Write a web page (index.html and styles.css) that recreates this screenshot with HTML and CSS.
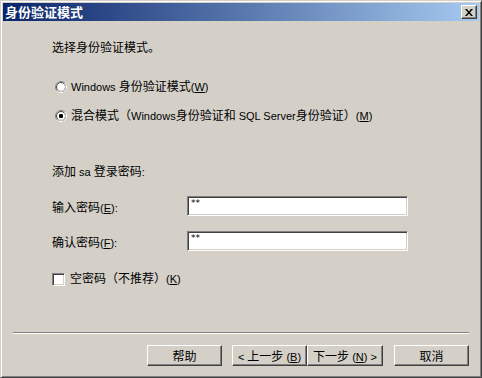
FILE: index.html
```html
<!DOCTYPE html>
<html>
<head>
<meta charset="utf-8">
<link rel="stylesheet" href="styles.css">
</head>
<body>
<div class="window">
  <div class="titlebar">
    <span class="title">身份验证模式</span>
    <span class="close"><svg width="8" height="7" viewBox="0 0 8 7"><path d="M0 0h2l2 2.5L6 0h2L5 3.5 8 7H6L4 4.5 2 7H0l3-3.5z" fill="#000"/></svg></span>
  </div>
  <div class="content">
    <div class="line intro">选择身份验证模式。</div>
    <div class="line radio-row r1">
      <svg class="radio" width="12" height="12" viewBox="0 0 12 12"><circle cx="6" cy="6" r="5.5" fill="#fff" stroke="#808080"/><path d="M10 2A5.5 5.5 0 0 1 2 10" fill="none" stroke="#fff"/><circle cx="6" cy="6" r="4.5" fill="#fff" stroke="#404040"/><path d="M9.2 2.8A4.5 4.5 0 0 1 2.8 9.2" fill="none" stroke="#d4d0c8"/></svg>
      <span><span class="lat">Windows </span>身份验证模式<span class="lat">(<u>W</u>)</span></span>
    </div>
    <div class="line radio-row r2">
      <svg class="radio" width="12" height="12" viewBox="0 0 12 12"><circle cx="6" cy="6" r="5.5" fill="#fff" stroke="#808080"/><path d="M10 2A5.5 5.5 0 0 1 2 10" fill="none" stroke="#fff"/><circle cx="6" cy="6" r="4.5" fill="#fff" stroke="#404040"/><path d="M9.2 2.8A4.5 4.5 0 0 1 2.8 9.2" fill="none" stroke="#d4d0c8"/><rect x="4" y="4" width="4" height="4" rx="1.2" fill="#000"/></svg>
      <span>混合模式（<span class="lat">Windows</span>身份验证和<span class="lat"> SQL Server</span>身份验证）<span class="lat">(<u>M</u>)</span></span>
    </div>
    <div class="line add"><span>添加<span class="lat"> sa </span>登录密码<span class="lat">:</span></span></div>
    <div class="field f1">
      <span class="flabel">输入密码<span class="lat">(<u>E</u>):</span></span>
      <span class="input">**</span>
    </div>
    <div class="field f2">
      <span class="flabel">确认密码<span class="lat">(<u>F</u>):</span></span>
      <span class="input">**</span>
    </div>
    <div class="line check-row">
      <span class="checkbox"></span>
      <span>空密码（不推荐）<span class="lat">(<u>K</u>)</span></span>
    </div>
  </div>
  <div class="separator"></div>
  <div class="buttons">
    <span class="btn help"><span>帮助</span></span>
    <span class="btn"><span><span class="lat">&lt; </span>上一步<span class="lat"> (<u>B</u>)</span></span></span>
    <span class="btn next"><span>下一步<span class="lat"> (<u>N</u>) &gt;</span></span></span>
    <span class="btn"><span>取消</span></span>
  </div>
</div>
</body>
</html>
```
FILE: styles.css
```css
html, body {
  margin: 0;
  padding: 0;
}
body {
  width: 482px;
  height: 378px;
  background: #d4d0c8;
  font-family: "Liberation Sans", "Noto Sans CJK SC", sans-serif;
  font-size: 12px;
  color: #000;
}
.lat {
  font-size: 11px;
  font-family: "Liberation Sans", sans-serif;
}
.window {
  box-sizing: border-box;
  width: 482px;
  height: 378px;
  border: 1px solid;
  border-color: #d4d0c8 #404040 #404040 #d4d0c8;
  box-shadow: inset 1px 1px #fff, inset -1px -1px #808080;
  padding: 2px;
  background: #d4d0c8;
}
.titlebar {
  height: 18px;
  background: linear-gradient(to right, #0a246a, #a6caf0);
  display: flex;
  align-items: center;
  justify-content: space-between;
  padding: 0 2px 0 2px;
}
.title {
  color: #fff;
  font-weight: bold;
  font-size: 13px;
  font-family: "Noto Sans CJK SC", sans-serif;
  line-height: 18px;
}
.close {
  box-sizing: border-box;
  width: 16px;
  height: 14px;
  background: #d4d0c8;
  border: 1px solid;
  border-color: #fff #404040 #404040 #fff;
  box-shadow: inset -1px -1px #808080;
  display: flex;
  align-items: center;
  justify-content: center;
}
.content {
  padding-left: 49px;
  display: flex;
  flex-direction: column;
}
.line {
  height: 16px;
  line-height: 16px;
  display: flex;
  align-items: center;
  white-space: pre;
}
.intro { margin-top: 19px; }
.r1 { margin-top: 23px; }
.r2 { margin-top: 13px; }
.add { margin-top: 40px; }
.radio-row .radio {
  margin-left: 3px;
  margin-right: 4px;
  flex: none;
}
.field {
  display: flex;
  align-items: center;
  height: 20px;
}
.f1 { margin-top: 16px; }
.f2 { margin-top: 15px; }
.flabel {
  width: 135px;
  flex: none;
}
.input {
  box-sizing: border-box;
  width: 221px;
  height: 20px;
  background: #fff;
  border: 1px solid;
  border-color: #808080 #fff #fff #808080;
  box-shadow: inset 1px 1px #404040, inset -1px -1px #d4d0c8;
  font-size: 9px;
  line-height: 12px;
  padding-left: 3px;
  font-family: "DejaVu Sans", sans-serif;
}
.check-row { margin-top: 20px; }
.checkbox {
  box-sizing: border-box;
  width: 13px;
  height: 13px;
  background: #fff;
  border: 1px solid;
  border-color: #808080 #fff #fff #808080;
  box-shadow: inset 1px 1px #404040, inset -1px -1px #d4d0c8;
  margin-right: 5px;
  flex: none;
}
.separator {
  margin: 45px 0 0 10px;
  width: 456px;
  border-top: 1px solid #808080;
  border-bottom: 1px solid #fff;
  height: 0;
}
.buttons {
  margin-top: 11px;
  display: flex;
  justify-content: flex-end;
  padding-right: 10px;
}
.btn {
  box-sizing: border-box;
  width: 75px;
  height: 21px;
  border: 1px solid;
  border-color: #fff #404040 #404040 #fff;
  box-shadow: inset -1px -1px #808080;
  display: flex;
  align-items: center;
  justify-content: center;
  white-space: pre;
}
.help { margin-right: 10px; }
.next { margin-right: 11px; width: 76px; }
```
